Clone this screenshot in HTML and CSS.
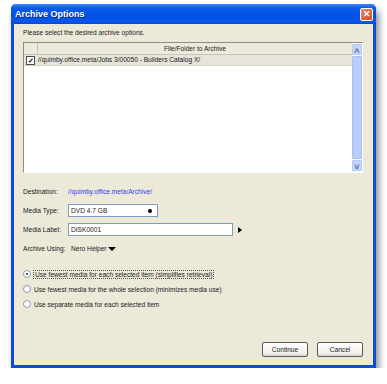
FILE: index.html
```html
<!DOCTYPE html>
<html lang="en">
<head>
    <meta charset="UTF-8">
    <title>Archive Options</title>
    <link rel="stylesheet" href="styles.css">
</head>
<body>

    <div class="window">
        <div class="titlebar">
            <span class="title">Archive Options</span>
            <span class="close">&#x2715;</span>
        </div>

        <div class="content">
            <p class="prompt">Please select the desired archive options.</p>

            <div class="listbox">
                <div class="list-main">
                    <div class="list-header">
                        <div class="col-check"></div>
                        <div class="col-name">File/Folder to Archive</div>
                    </div>
                    <div class="list-row">
                        <div class="col-check"><span class="checkbox">&#x2713;</span></div>
                        <div class="row-text">//quimby.office.meta/Jobs 3/00050 - Builders Catalog X/</div>
                    </div>
                </div>
                <div class="scrollbar">
                    <div class="sb-btn">&#x2c4;</div>
                    <div class="sb-thumb"></div>
                    <div class="sb-btn">&#x2c5;</div>
                </div>
            </div>

            <div class="field first">
                <span class="label">Destination:</span>
                <span class="link">//quimby.office.meta/Archive/</span>
            </div>

            <div class="field">
                <span class="label">Media Type:</span>
                <div class="input short">DVD 4.7 GB<span class="dot"></span></div>
            </div>

            <div class="field">
                <span class="label">Media Label:</span>
                <div class="input long">DISK0001</div>
                <span class="arrow-right"></span>
            </div>

            <div class="field">
                <span class="label">Archive Using:</span>
                <span class="value">Nero Helper</span>
                <span class="arrow-down"></span>
            </div>

            <div class="radios">
                <label class="radio"><span class="circle checked"></span><span class="focus">Use fewest media for each selected item (simplifies retrieval)</span></label>
                <label class="radio"><span class="circle"></span><span>Use fewest media for the whole selection (minimizes media use)</span></label>
                <label class="radio"><span class="circle"></span><span>Use separate media for each selected item</span></label>
            </div>

            <div class="buttons">
                <button class="btn">Continue</button>
                <button class="btn">Cancel</button>
            </div>
        </div>
    </div>

</body>
</html>
```

FILE: styles.css
```css
body {
    margin: 0;
    padding: 0;
    background-color: #ffffff;
    font-family: "Liberation Sans", Arial, sans-serif;
    font-size: 6.6px;
    color: #1a1a1a;
}

.window {
    margin: 4px 0 0 11px;
    width: 365px;
    height: 364px;
    box-sizing: border-box;
    background: #0a4fd8;
    border-radius: 5px 5px 0 0;
    padding: 0 3px 3px 3px;
    display: flex;
    flex-direction: column;
    box-shadow: 3px 6px 7px rgba(0, 0, 0, 0.45);
}

.titlebar {
    height: 20px;
    display: flex;
    align-items: center;
    justify-content: space-between;
    margin: 0 -3px;
    padding: 0 3px 0 4px;
    border-radius: 5px 5px 0 0;
    background: linear-gradient(#3d8af7 0%, #0a5ae8 20%, #0050e6 60%, #0a58ea 90%, #0645c8 100%);
}

.title {
    color: #ffffff;
    font-weight: bold;
    font-size: 9px;
    text-shadow: 1px 1px 0 #0a2a8a;
}

.close {
    width: 13px;
    height: 13px;
    box-sizing: border-box;
    border: 1px solid #ffffff;
    border-radius: 2px;
    background: linear-gradient(135deg, #e98a6c, #d5491f);
    color: #ffffff;
    font-size: 9px;
    font-weight: bold;
    line-height: 11px;
    text-align: center;
}

.content {
    flex: 1;
    background-color: #ece9d8;
    padding: 0 10px 0 9px;
    display: flex;
    flex-direction: column;
}

.prompt {
    margin: 4px 0 0 0;
    height: 9px;
    line-height: 9px;
}

.listbox {
    margin-top: 5px;
    height: 131px;
    display: flex;
    border: 1px solid #8f8c80;
    border-right-color: #ffffff;
    border-bottom-color: #ffffff;
    box-sizing: border-box;
    background: #ffffff;
}

.list-main {
    flex: 1;
}

.list-header {
    display: flex;
    height: 11px;
    background: #ebeadb;
    border-bottom: 1px solid #c9c5b4;
    line-height: 11px;
}

.col-check {
    width: 13px;
    border-right: 1px solid #c9c5b4;
    display: flex;
    align-items: center;
    justify-content: center;
}

.col-name {
    flex: 1;
    text-align: center;
}

.list-row {
    display: flex;
    height: 10px;
    line-height: 10px;
    background: #e6e4db;
    border-bottom: 1px solid #d8d5c8;
}

.list-row .col-check {
    border-right: none;
}

.row-text {
    padding-left: 1px;
}

.checkbox {
    width: 7px;
    height: 7px;
    border: 1px solid #4a4a4a;
    background: #ffffff;
    font-size: 7px;
    font-weight: bold;
    line-height: 7px;
    text-align: center;
    color: #000000;
}

.scrollbar {
    width: 10px;
    display: flex;
    flex-direction: column;
    background: #f4f6fc;
    padding: 1px 0;
}

.sb-btn {
    height: 9px;
    background: #c5d6fb;
    border: 1px solid #b4c8f5;
    border-radius: 1px;
    color: #4d6185;
    font-size: 9px;
    line-height: 12px;
    text-align: center;
    font-weight: bold;
}

.sb-thumb {
    flex: 1;
    background: #b8cdf8;
    border: 1px solid #aac0f0;
    margin: 1px 0;
    border-radius: 1px;
}

.field {
    display: flex;
    align-items: center;
    margin-top: 6px;
    height: 13px;
}

.field.first {
    margin-top: 12px;
}

.label {
    width: 45px;
    white-space: nowrap;
}

.link {
    color: #3340ee;
}

.input {
    height: 13px;
    box-sizing: border-box;
    background: #ffffff;
    border: 1px solid #7f9db9;
    display: flex;
    align-items: center;
    padding-left: 2px;
    position: relative;
}

.input.short {
    width: 90px;
}

.input.long {
    width: 165px;
}

.dot {
    position: absolute;
    right: 5px;
    top: 4px;
    width: 4px;
    height: 4px;
    border-radius: 50%;
    background: #000000;
}

.arrow-right {
    margin-left: 5px;
    width: 0;
    height: 0;
    border-top: 3px solid transparent;
    border-bottom: 3px solid transparent;
    border-left: 4px solid #000000;
}

.value {
    margin-left: 3px;
}

.arrow-down {
    margin-left: 1px;
    width: 0;
    height: 0;
    border-left: 4px solid transparent;
    border-right: 4px solid transparent;
    border-top: 4px solid #000000;
}

.radios {
    margin-top: 13px;
    display: flex;
    flex-direction: column;
    gap: 3px;
}

.radio {
    display: flex;
    align-items: center;
    height: 12px;
}

.circle {
    width: 6px;
    height: 6px;
    border-radius: 50%;
    border: 1px solid #8d9aab;
    background: #ffffff;
    margin-right: 3px;
    position: relative;
}

.circle.checked::after {
    content: "";
    position: absolute;
    left: 2px;
    top: 2px;
    width: 2px;
    height: 2px;
    border-radius: 50%;
    background: #2a2a2a;
}

.focus {
    outline: 1px dotted #555555;
    padding: 0 1px;
}

.buttons {
    margin-top: auto;
    margin-bottom: 8px;
    display: flex;
    justify-content: flex-end;
    gap: 9px;
}

.btn {
    width: 46px;
    height: 15px;
    padding: 0;
    font-family: "Liberation Sans", Arial, sans-serif;
    font-size: 6.6px;
    color: #1a1a1a;
    background: linear-gradient(#ffffff, #f0efe8 80%, #d8d5c8);
    border: 1px solid #5a5a5a;
    border-radius: 2px;
}
```
